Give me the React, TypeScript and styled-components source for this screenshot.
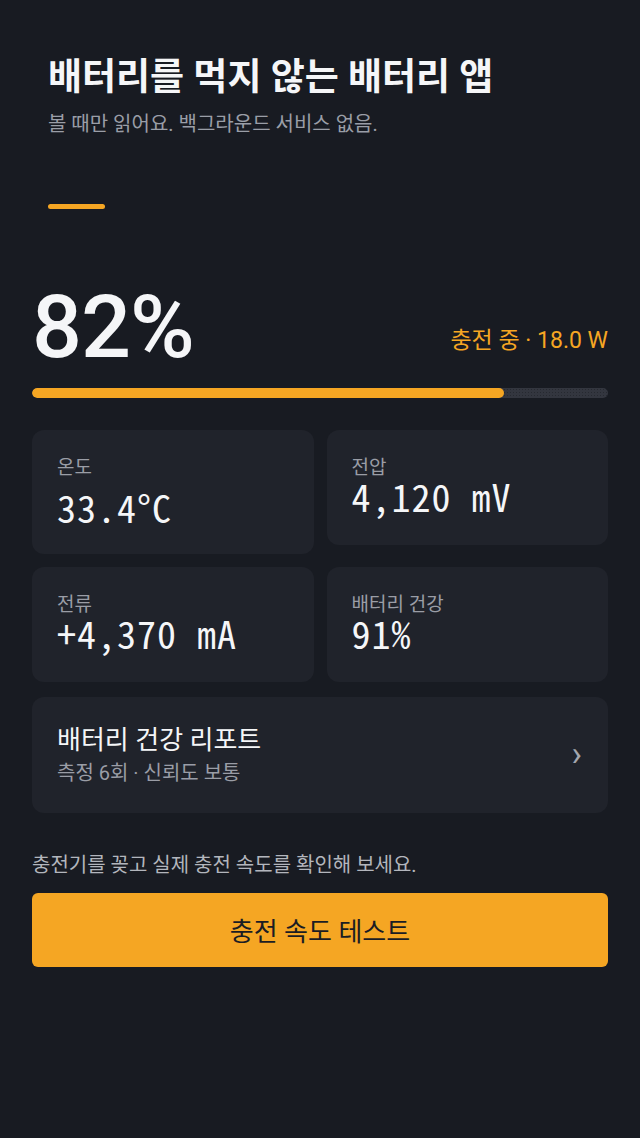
import * as React from 'react';
import styled, { createGlobalStyle } from 'styled-components';

const accent = '#f5a623';

const GlobalStyle = createGlobalStyle`
  html, body {
    margin: 0;
    padding: 0;
    background: #181b22;
  }
  body {
    font-family: Roboto, 'Noto Sans CJK KR', sans-serif;
    color: #f3f4f6;
  }
`;

const Page = styled.div`
  min-height: 1138px;
  box-sizing: border-box;
  padding: 0 32px;
`;

const Header = styled.header`
  padding: 54px 16px 0;
`;

const Title = styled.h1`
  margin: 0;
  font-size: 37px;
  line-height: 1.3;
  font-weight: 700;
  color: #f5f6f8;
`;

const Subtitle = styled.p`
  margin: 8px 0 0;
  font-size: 20px;
  line-height: 1.4;
  color: #9a9ea7;
`;

const Dash = styled.div`
  margin-top: 66px;
  width: 57px;
  height: 5px;
  border-radius: 3px;
  background: ${accent};
`;

const Hero = styled.div`
  margin-top: 74px;
  display: flex;
  align-items: flex-end;
  justify-content: space-between;
`;

const Percent = styled.div`
  font-size: 88px;
  line-height: 1;
  font-weight: 500;
  letter-spacing: -1px;
  color: #f5f6f8;
`;

const Status = styled.div`
  margin-bottom: 14px;
  font-size: 23px;
  line-height: 1.4;
  color: ${accent};
`;

const Track = styled.div`
  margin-top: 17px;
  height: 10px;
  border-radius: 5px;
  overflow: hidden;
  background-color: #33363f;
  background-image: radial-gradient(#262930 0.6px, transparent 0.8px);
  background-size: 3px 3px;
`;

const Fill = styled.div`
  height: 100%;
  border-radius: 5px;
  background: ${accent};
`;

const Grid = styled.div`
  margin-top: 32px;
  display: grid;
  grid-template-columns: 1fr 1fr;
  gap: 13px;
  align-items: start;
`;

const Card = styled.div<{ $roomy?: boolean }>`
  background: #20232b;
  border-radius: 12px;
  padding: 28px 25px ${(p) => (p.$roomy ? '29px' : '31px')};
`;

const Label = styled.div`
  font-size: 19px;
  line-height: 1.1;
  color: #9a9da6;
`;

const Value = styled.div<{ $roomy?: boolean }>`
  margin-top: ${(p) => (p.$roomy ? '10px' : '-1px')};
  font-family: 'Noto Sans Mono CJK KR', monospace;
  font-size: 38px;
  letter-spacing: 1px;
  line-height: 36px;
  color: #f5f6f8;
`;

const Report = styled.div`
  margin-top: 15px;
  display: flex;
  align-items: center;
  justify-content: space-between;
  background: #20232b;
  border-radius: 12px;
  padding: 27px 25px 27px;
  cursor: pointer;
`;

const ReportTitle = styled.div`
  font-size: 26px;
  line-height: 1.3;
  color: #f5f6f8;
`;

const ReportMeta = styled.div`
  margin-top: 2px;
  font-size: 20px;
  line-height: 1.3;
  color: #9a9da6;
`;

const Chevron = styled.span`
  margin-right: 1px;
  font-size: 35px;
  line-height: 1;
  color: #a3a6ae;
`;

const Hint = styled.p`
  margin: 38px 0 0;
  font-size: 20px;
  line-height: 1.4;
  color: #b3b6bd;
`;

const Button = styled.button`
  display: block;
  margin-top: 14px;
  width: 100%;
  height: 74px;
  border: none;
  border-radius: 6px;
  background: ${accent};
  color: #1b1d23;
  font-family: Roboto, 'Noto Sans CJK KR', sans-serif;
  font-size: 26px;
  cursor: pointer;
`;

const stats = [
  { label: '온도', value: '33.4°C', roomy: true },
  { label: '전압', value: '4,120 mV' },
  { label: '전류', value: '+4,370 mA' },
  { label: '배터리 건강', value: '91%' },
];

const App: React.FC = () => {
  const level = 82;
  return (
    <Page>
      <GlobalStyle />
      <Header>
        <Title>배터리를 먹지 않는 배터리 앱</Title>
        <Subtitle>볼 때만 읽어요. 백그라운드 서비스 없음.</Subtitle>
        <Dash />
      </Header>

      <Hero>
        <Percent>{level}%</Percent>
        <Status>충전 중 · 18.0 W</Status>
      </Hero>
      <Track>
        <Fill style={{ width: `${level}%` }} />
      </Track>

      <Grid>
        {stats.map(({ label, value, roomy }) => (
          <Card key={label} $roomy={roomy}>
            <Label>{label}</Label>
            <Value $roomy={roomy}>{value}</Value>
          </Card>
        ))}
      </Grid>

      <Report>
        <div>
          <ReportTitle>배터리 건강 리포트</ReportTitle>
          <ReportMeta>측정 6회 · 신뢰도 보통</ReportMeta>
        </div>
        <Chevron>›</Chevron>
      </Report>

      <Hint>충전기를 꽂고 실제 충전 속도를 확인해 보세요.</Hint>
      <Button>충전 속도 테스트</Button>
    </Page>
  );
};

export default App;
